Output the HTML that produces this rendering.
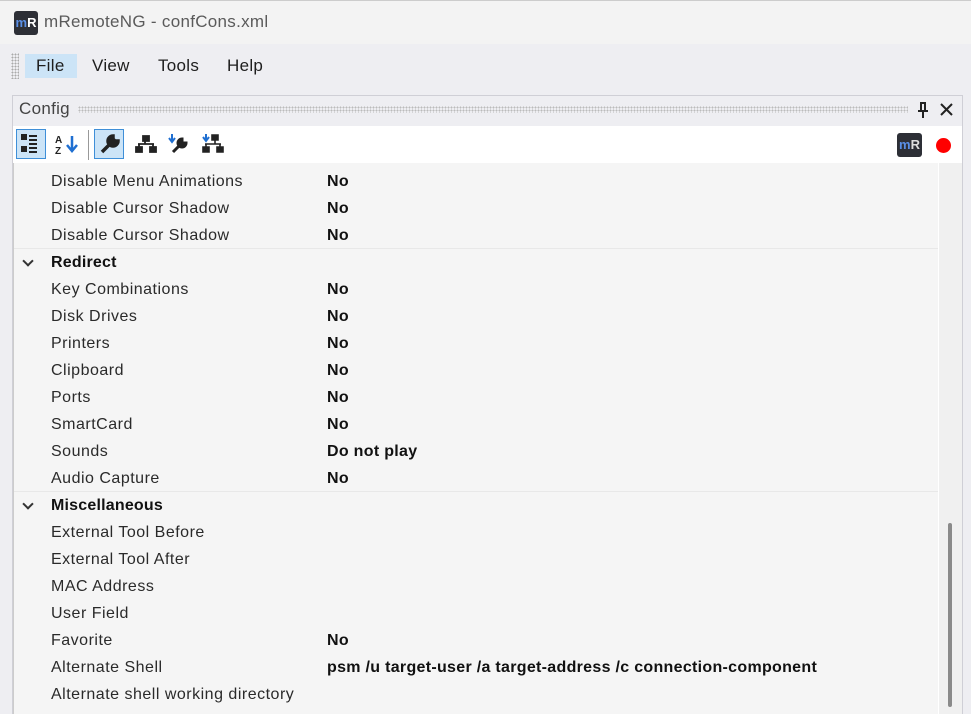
<!DOCTYPE html>
<html><head><meta charset="utf-8"><style>
*{margin:0;padding:0;box-sizing:border-box}
body{width:971px;height:714px;overflow:hidden;background:#eeeef2;font-family:"Liberation Sans",sans-serif;position:relative;color:#1e1e1e}
.title{position:absolute;left:0;top:0;width:971px;height:44px;background:#f3f3f3;border-top:1px solid #ccc}
.title .logo{position:absolute;left:14px;top:10px;width:24px;height:24px;background:#2d2f36;border-radius:3px;color:#fff;font:bold 13px "Liberation Sans";line-height:24px;text-align:center}
.title .t{position:absolute;left:44px;top:11px;font-size:17px;color:#5a5a5a;letter-spacing:0.3px}
.menu{position:absolute;left:0;top:45px;width:971px;height:44px;background:#eeeef2}
.grip{position:absolute;left:11px;top:53px;width:8px;height:26px;background-image:radial-gradient(#aaa 0.8px,transparent 1px);background-size:3px 3px}
.mi{position:absolute;top:54px;height:24px;font-size:17px;line-height:24px;color:#1e1e1e;letter-spacing:0.3px}
.panel{position:absolute;left:12px;top:95px;width:951px;height:619px;border:1px solid #cfcfd6;background:#eeeef2}
.hdr{position:absolute;left:19px;top:99px;font-size:17px;color:#444;letter-spacing:0.3px}
.dots{position:absolute;left:78px;top:106px;width:830px;height:7px;background-image:radial-gradient(#bbb 0.8px,transparent 1px);background-size:3px 3px}
.tb{position:absolute;left:13px;top:126px;width:949px;height:37px;background:#fff}
.btn{position:absolute;top:129px;width:30px;height:30px}
.sel{background:#cce4f7;border:1px solid #3f8fd8}
.grid{position:absolute;left:13px;top:163px;width:925px;height:551px;background:#f5f5f5;border-left:1px solid #ccc}
.row{position:absolute;left:0;width:925px;height:27px;font-size:16px;line-height:27px}
.row .n{position:absolute;left:37px;color:#2a2a2a;letter-spacing:0.5px}
.row .v{position:absolute;left:313px;font-weight:bold;color:#111;letter-spacing:0.3px}
.row.g{border-top:1px solid #e8e8e8}
.row.g .n{font-weight:bold;color:#111;letter-spacing:0.2px}
.chev{position:absolute;left:10px;top:8px;width:8px;height:8px;border-right:2px solid #333;border-bottom:2px solid #333;transform:rotate(45deg)}
.sb{position:absolute;left:938px;top:163px;width:24px;height:551px;background:#f0f0f0;border-left:1px solid #fff}
.thumb{position:absolute;left:948px;top:523px;width:4px;height:184px;background:#8a8a8a;border-radius:2px}
</style></head><body>
<div class="title"><div class="logo"><span style="color:#5a8fe6">m</span>R</div><div class="t">mRemoteNG - confCons.xml</div></div>
<div class="menu"></div>
<div class="grip"></div>
<div class="mi" style="left:25px;width:52px;background:#cce4f7;padding-left:11px">File</div>
<div class="mi" style="left:92px">View</div>
<div class="mi" style="left:158px">Tools</div>
<div class="mi" style="left:227px">Help</div>
<div class="panel"></div>
<div class="hdr">Config</div>
<div class="dots"></div>
<svg style="position:absolute;left:916px;top:101px" width="14" height="18"><path d="M4 2h6M5 2v8M9 2v8M2 10h10M7 10v7" stroke="#222" stroke-width="2" fill="none"/></svg>
<svg style="position:absolute;left:939px;top:102px" width="15" height="15"><path d="M2 2L13 13M13 2L2 13" stroke="#222" stroke-width="2"/></svg>
<div class="tb"></div>
<div class="btn sel" style="left:16px"></div>
<svg style="position:absolute;left:20px;top:133px" width="24" height="22"><g fill="#222"><rect x="1" y="1" width="6" height="6"/><rect x="1" y="13" width="6" height="6"/><rect x="9" y="2" width="8" height="2"/><rect x="9" y="6" width="8" height="2"/><rect x="9" y="10" width="8" height="2"/><rect x="9" y="14" width="8" height="2"/><rect x="9" y="18" width="8" height="2"/></g></svg>
<svg style="position:absolute;left:54px;top:132px" width="26" height="24"><text x="1" y="11" font-size="10" font-weight="bold" font-family="Liberation Sans" fill="#222">A</text><text x="1" y="22" font-size="10" font-weight="bold" font-family="Liberation Sans" fill="#222">Z</text><path d="M18 4v14M13 13l5 6 5-6" stroke="#1f6fd1" stroke-width="2.5" fill="none"/></svg>
<div style="position:absolute;left:88px;top:130px;width:1px;height:30px;background:#999"></div>
<div class="btn sel" style="left:94px"></div>
<svg style="position:absolute;left:99px;top:133px" width="22" height="22"><path d="M3 19L12 10M14 3a5 5 0 1 0 5 5l-3 0-2-2z" stroke="#222" stroke-width="3.5" fill="#222"/></svg>
<svg style="position:absolute;left:135px;top:134px" width="22" height="20"><path d="M8 2h6v5H8zM10 7v3M3 10h16M4 10v3M18 10v3M1 13h6v5H1zM15 13h6v5h-6z" stroke="#222" stroke-width="1.8" fill="#222"/></svg>
<svg style="position:absolute;left:167px;top:133px" width="24" height="22"><path d="M5 1v7M2 5l3 4 3-4" stroke="#1f6fd1" stroke-width="2" fill="none"/><path d="M6 19L13 12M15 6a4 4 0 1 0 4 4l-3 0-1-1z" stroke="#222" stroke-width="3" fill="#222"/></svg>
<svg style="position:absolute;left:201px;top:133px" width="24" height="22"><path d="M5 1v6M2 4l3 4 3-4" stroke="#1f6fd1" stroke-width="2" fill="none"/><path d="M11 2h6v5h-6zM14 7v4M4 11h16M5 11v3M19 11v3M2 14h6v5H2zM16 14h6v5h-6z" stroke="#222" stroke-width="1.6" fill="#222"/></svg>
<div style="position:absolute;left:897px;top:133px;width:25px;height:24px;background:#2d2f36;border-radius:3px;color:#ddd;font:bold 13px 'Liberation Sans';line-height:24px;text-align:center"><span style="color:#5a8fe6">m</span>R</div>
<div style="position:absolute;left:936px;top:138px;width:15px;height:15px;border-radius:50%;background:#f00"></div>
<div class="grid">
<div class="row" style="top:5px"><span class="n">Disable Menu Animations</span><span class="v">No</span></div>
<div class="row" style="top:32px"><span class="n">Disable Cursor Shadow</span><span class="v">No</span></div>
<div class="row" style="top:59px"><span class="n">Disable Cursor Shadow</span><span class="v">No</span></div>
<div class="row g" style="top:85px"><span class="chev"></span><span class="n">Redirect</span></div>
<div class="row" style="top:113px"><span class="n">Key Combinations</span><span class="v">No</span></div>
<div class="row" style="top:140px"><span class="n">Disk Drives</span><span class="v">No</span></div>
<div class="row" style="top:167px"><span class="n">Printers</span><span class="v">No</span></div>
<div class="row" style="top:194px"><span class="n">Clipboard</span><span class="v">No</span></div>
<div class="row" style="top:221px"><span class="n">Ports</span><span class="v">No</span></div>
<div class="row" style="top:248px"><span class="n">SmartCard</span><span class="v">No</span></div>
<div class="row" style="top:275px"><span class="n">Sounds</span><span class="v">Do not play</span></div>
<div class="row" style="top:302px"><span class="n">Audio Capture</span><span class="v">No</span></div>
<div class="row g" style="top:328px"><span class="chev"></span><span class="n">Miscellaneous</span></div>
<div class="row" style="top:356px"><span class="n">External Tool Before</span></div>
<div class="row" style="top:383px"><span class="n">External Tool After</span></div>
<div class="row" style="top:410px"><span class="n">MAC Address</span></div>
<div class="row" style="top:437px"><span class="n">User Field</span></div>
<div class="row" style="top:464px"><span class="n">Favorite</span><span class="v">No</span></div>
<div class="row" style="top:491px"><span class="n">Alternate Shell</span><span class="v">psm /u target-user /a target-address /c connection-component</span></div>
<div class="row" style="top:518px"><span class="n">Alternate shell working directory</span></div>
</div>
<div class="sb"></div>
<div class="thumb"></div>
</body></html>
